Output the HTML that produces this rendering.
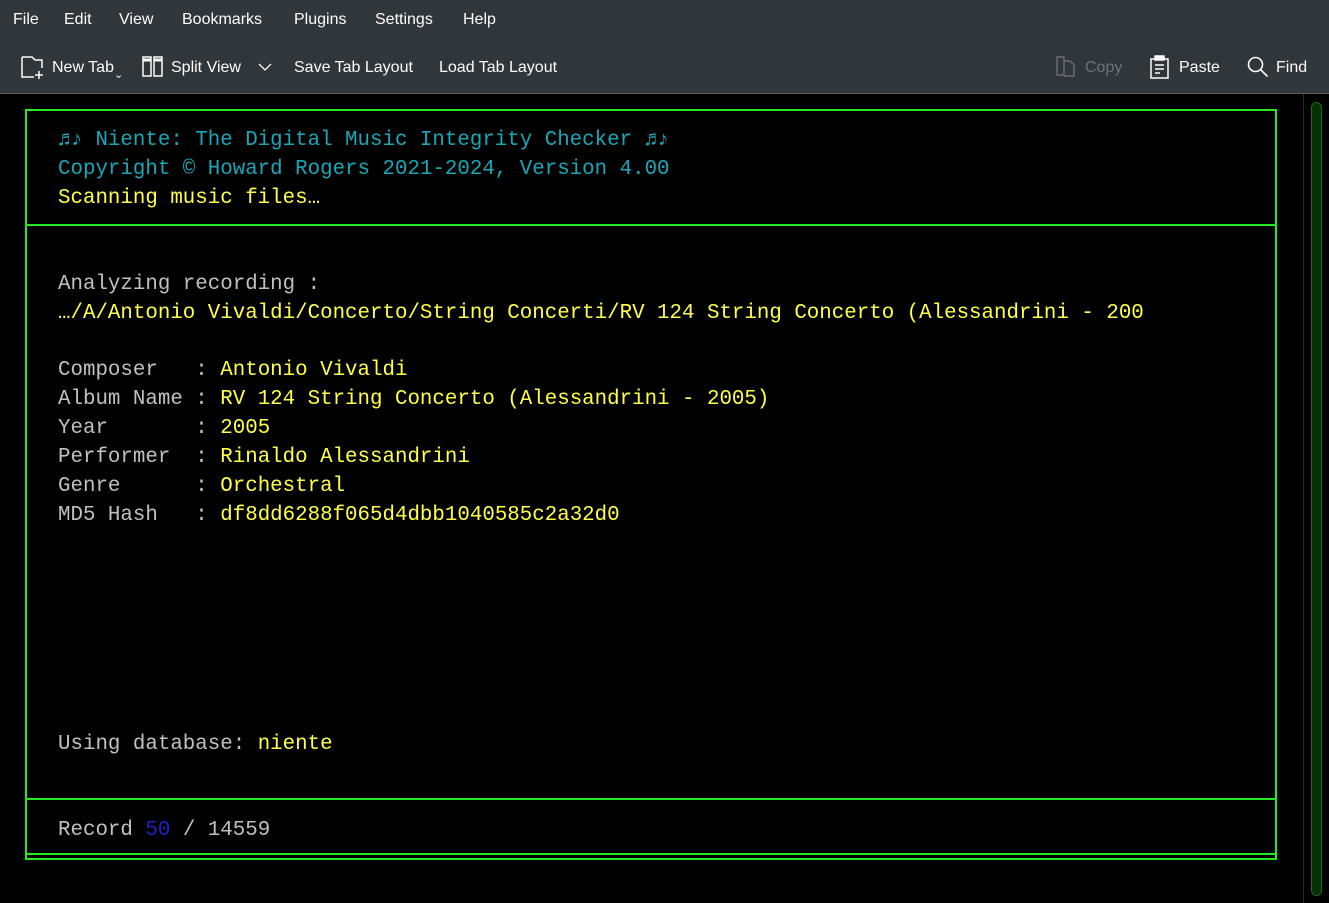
<!DOCTYPE html>
<html><head><meta charset="utf-8"><style>
body{margin:0;width:1329px;height:903px;background:#000;overflow:hidden;position:relative;font-family:"Liberation Sans","DejaVu Sans",sans-serif}
.menu{position:absolute;left:0;top:0;width:1329px;height:40px;background:#31363b;color:#fcfcfc;font-size:16px}
.menu span{position:absolute;top:11px}
.tb{position:absolute;left:0;top:40px;width:1329px;height:53px;background:#31363b;color:#fcfcfc;font-size:16px;border-bottom:1px solid #5a5f64}
.tb span{position:absolute;top:19px}
.t{position:absolute;left:58px;font-family:"Liberation Mono",monospace;font-size:20.8px;line-height:29px;white-space:pre;color:#c0c0c0}
.c{color:#17a7b7}.y{color:#ffff4a}.b{color:#2020c8}
.g{position:absolute;background:#22ea22}
</style></head><body>
<div class="menu"><span style="left:13px">File</span><span style="left:64px">Edit</span><span style="left:119px">View</span><span style="left:182px">Bookmarks</span><span style="left:294px">Plugins</span><span style="left:375px">Settings</span><span style="left:463px">Help</span></div>
<div class="tb">
<svg style="position:absolute;left:21px;top:15px" width="24" height="26" viewBox="0 0 24 26" fill="none" stroke="#fcfcfc" stroke-width="1.5"><path d="M1 2h10l3 3h7v8M1 2v20h12"/><path d="M18 16v8M14 20h8"/></svg>
<span style="left:52px">New Tab</span><span style="left:114px;top:28px;font-size:11px">⌄</span>
<svg style="position:absolute;left:142px;top:16px" width="22" height="22" viewBox="0 0 22 22" fill="none" stroke="#fcfcfc" stroke-width="1.5"><rect x="1" y="1" width="8" height="19"/><rect x="12" y="1" width="8" height="19"/><path d="M1 4h8M12 4h8" stroke-width="3"/></svg>
<span style="left:171px">Split View</span>
<svg style="position:absolute;left:258px;top:22px" width="14" height="10" viewBox="0 0 14 10" fill="none" stroke="#fcfcfc" stroke-width="1.3"><path d="M1 2l6 6 6-6"/></svg>
<span style="left:294px">Save Tab Layout</span><span style="left:439px">Load Tab Layout</span>
<svg style="position:absolute;left:1056px;top:16px" width="20" height="22" viewBox="0 0 20 22" fill="none" stroke="#6a6e72" stroke-width="1.4"><path d="M1 1h7v18H1zM8 5h6l4 4v11H8"/></svg>
<span style="left:1085px;color:#6e7377">Copy</span>
<svg style="position:absolute;left:1150px;top:15px" width="20" height="24" viewBox="0 0 20 24" fill="none" stroke="#fcfcfc" stroke-width="1.5"><rect x="1" y="4" width="17" height="19"/><rect x="5" y="1" width="9" height="4" fill="#fcfcfc"/><path d="M5 10h9M5 14h9M5 18h5"/></svg>
<span style="left:1179px">Paste</span>
<svg style="position:absolute;left:1247px;top:16px" width="22" height="22" viewBox="0 0 22 22" fill="none" stroke="#fcfcfc" stroke-width="1.6"><circle cx="8.5" cy="8.5" r="7"/><path d="M13.5 13.5l7 7"/></svg>
<span style="left:1276px">Find</span>
</div>
<div class="g" style="left:25px;top:109px;width:1252px;height:2px"></div>
<div class="g" style="left:25px;top:224px;width:1252px;height:2px"></div>
<div class="g" style="left:25px;top:798px;width:1252px;height:2px"></div>
<div class="g" style="left:25px;top:853px;width:1252px;height:2px"></div>
<div class="g" style="left:25px;top:858px;width:1252px;height:2px"></div>
<div class="g" style="left:25px;top:109px;width:2px;height:751px"></div>
<div class="g" style="left:1275px;top:109px;width:2px;height:751px"></div>
<div style="position:absolute;left:1303px;top:94px;width:1px;height:809px;background:#2a2a2a"></div>
<div style="position:absolute;left:1311px;top:102px;width:9px;height:792px;background:#063006;border:1px solid #1d6a1d;border-radius:6px"></div>
<div class="t c" style="top:126px">♬♪ Niente: The Digital Music Integrity Checker ♬♪</div>
<div class="t c" style="top:155px">Copyright © Howard Rogers 2021-2024, Version 4.00</div>
<div class="t y" style="top:184px">Scanning music files…</div>
<div class="t" style="top:270px">Analyzing recording :</div>
<div class="t y" style="top:299px">…/A/Antonio Vivaldi/Concerto/String Concerti/RV 124 String Concerto (Alessandrini - 200</div>
<div class="t" style="top:356px">Composer   : <span class="y">Antonio Vivaldi</span>
Album Name : <span class="y">RV 124 String Concerto (Alessandrini - 2005)</span>
Year       : <span class="y">2005</span>
Performer  : <span class="y">Rinaldo Alessandrini</span>
Genre      : <span class="y">Orchestral</span>
MD5 Hash   : <span class="y">df8dd6288f065d4dbb1040585c2a32d0</span></div>
<div class="t" style="top:730px">Using database: <span class="y">niente</span></div>
<div class="t" style="top:816px">Record <span class="b">50</span> / 14559</div>
</body></html>
